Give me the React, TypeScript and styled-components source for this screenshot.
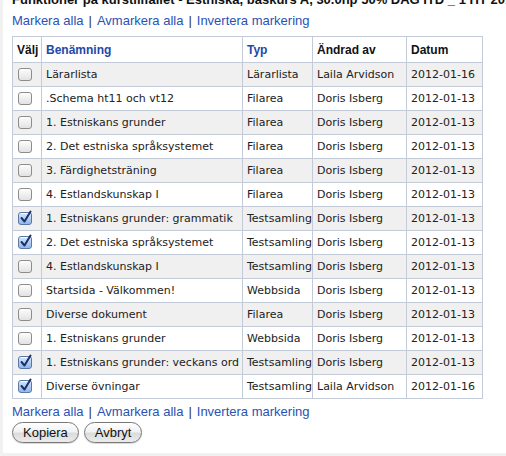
import * as React from "react";
import styled, { createGlobalStyle } from "styled-components";

const GlobalStyle = createGlobalStyle`
  html, body {
    margin: 0;
    padding: 0;
    background: #f1f1f1;
    overflow: hidden;
  }
  body {
    font-family: "Liberation Sans", Arial, sans-serif;
  }
`;

const rows = [
  { name: "Lärarlista", type: "Lärarlista", by: "Laila Arvidson", date: "2012-01-16", checked: false },
  { name: ".Schema ht11 och vt12", type: "Filarea", by: "Doris Isberg", date: "2012-01-13", checked: false },
  { name: "1. Estniskans grunder", type: "Filarea", by: "Doris Isberg", date: "2012-01-13", checked: false },
  { name: "2. Det estniska språksystemet", type: "Filarea", by: "Doris Isberg", date: "2012-01-13", checked: false },
  { name: "3. Färdighetsträning", type: "Filarea", by: "Doris Isberg", date: "2012-01-13", checked: false },
  { name: "4. Estlandskunskap I", type: "Filarea", by: "Doris Isberg", date: "2012-01-13", checked: false },
  { name: "1. Estniskans grunder: grammatik", type: "Testsamling", by: "Doris Isberg", date: "2012-01-13", checked: true },
  { name: "2. Det estniska språksystemet", type: "Testsamling", by: "Doris Isberg", date: "2012-01-13", checked: true },
  { name: "4. Estlandskunskap I", type: "Testsamling", by: "Doris Isberg", date: "2012-01-13", checked: false },
  { name: "Startsida - Välkommen!", type: "Webbsida", by: "Doris Isberg", date: "2012-01-13", checked: false },
  { name: "Diverse dokument", type: "Filarea", by: "Doris Isberg", date: "2012-01-13", checked: false },
  { name: "1. Estniskans grunder", type: "Webbsida", by: "Doris Isberg", date: "2012-01-13", checked: false },
  { name: "1. Estniskans grunder: veckans ord", type: "Testsamling", by: "Doris Isberg", date: "2012-01-13", checked: true },
  { name: "Diverse övningar", type: "Testsamling", by: "Laila Arvidson", date: "2012-01-16", checked: true },
];

const Page = styled.div`
  margin-left: 3px;
  height: 453px;
  background: #fff;
  overflow: hidden;
  padding: 0 9px;
`;

const Title = styled.h1`
  margin: -8px 0 0 0;
  font-size: 13px;
  line-height: 16px;
  font-weight: bold;
  color: #111;
  white-space: nowrap;
`;

const LinkBar = styled.div<{ $top: number }>`
  margin-top: ${(p) => p.$top}px;
  font-size: 13px;
  line-height: 16px;
  color: #555;
  white-space: nowrap;
`;

const Link = styled.a`
  color: #2a52b4;
  text-decoration: none;
  cursor: pointer;
`;

const Sep = styled.span`
  margin: 0 5px;
  color: #333;
`;

const Table = styled.table`
  margin-top: 7px;
  border-collapse: collapse;
  table-layout: fixed;
  width: 470px;
  font-family: "DejaVu Sans", Verdana, sans-serif;
  font-size: 11px;
  color: #222;
`;

const Th = styled.th<{ $link?: boolean }>`
  height: 25px;
  padding: 0 2px 0 4px;
  border: 1px solid #c3cbd8;
  background: #fff;
  text-align: left;
  font-family: "Liberation Sans", Arial, sans-serif;
  font-size: 12px;
  font-weight: bold;
  color: ${(p) => (p.$link ? "#2348a6" : "#111")};
  white-space: nowrap;
`;

const Tr = styled.tr<{ $odd: boolean }>`
  background: ${(p) => (p.$odd ? "#f0f0f0" : "#fff")};
`;

const Td = styled.td`
  height: 23px;
  padding: 0 1px 0 4px;
  border: 1px solid #c3cbd8;
  white-space: nowrap;
  overflow: hidden;
  text-overflow: clip;
`;

const Box = styled.span<{ $checked: boolean }>`
  display: inline-block;
  vertical-align: middle;
  position: relative;
  width: 12px;
  height: 11px;
  margin-left: 1px;
  border: 1px solid ${(p) => (p.$checked ? "#5a78a6" : "#8c8c8c")};
  border-radius: 3px;
  background: ${(p) =>
    p.$checked
      ? "linear-gradient(#d4e6fb, #8fb8ea)"
      : "linear-gradient(#fdfdfd, #e2e2e2)"};
  box-shadow: inset 0 1px 0 rgba(255, 255, 255, 0.8);
  svg {
    position: absolute;
    left: 1px;
    top: -3px;
  }
`;

const Buttons = styled.div`
  display: flex;
  gap: 5px;
  margin-top: 2px;
`;

const Button = styled.button`
  height: 21px;
  padding: 0 10px;
  border: 1px solid #777;
  border-radius: 11px;
  background: linear-gradient(#ffffff 0%, #f2f2f2 45%, #dcdcdc 55%, #ececec 100%);
  font-family: "Liberation Sans", Arial, sans-serif;
  font-size: 13px;
  color: #111;
  box-shadow: 0 1px 1px rgba(0, 0, 0, 0.15);
`;

const Check = ({ checked }: { checked: boolean }) => (
  <Box $checked={checked}>
    {checked && (
      <svg width="12" height="14" viewBox="0 0 12 14">
        <path d="M1.5 8 L4.5 11.5 L10.5 1.5" fill="none" stroke="#1d2f66" strokeWidth="2" strokeLinecap="round" strokeLinejoin="round" />
      </svg>
    )}
  </Box>
);

const Links = ({ top }: { top: number }) => (
  <LinkBar $top={top}>
    <Link>Markera alla</Link>
    <Sep>|</Sep>
    <Link>Avmarkera alla</Link>
    <Sep>|</Sep>
    <Link>Invertera markering</Link>
  </LinkBar>
);

const App = () => {
  return (
    <Page>
      <GlobalStyle />
      <Title>Funktioner på kurstillfället - Estniska, baskurs A, 30.0hp 50% DAG ITD _ 1 HT 2011</Title>
      <Links top={5} />
      <Table>
        <colgroup>
          <col style={{ width: 29 }} />
          <col style={{ width: 201 }} />
          <col style={{ width: 70 }} />
          <col style={{ width: 94 }} />
          <col style={{ width: 76 }} />
        </colgroup>
        <thead>
          <tr>
            <Th>Välj</Th>
            <Th $link>Benämning</Th>
            <Th $link>Typ</Th>
            <Th>Ändrad av</Th>
            <Th>Datum</Th>
          </tr>
        </thead>
        <tbody>
          {rows.map((r, i) => (
            <Tr key={i} $odd={i % 2 === 0}>
              <Td>
                <Check checked={r.checked} />
              </Td>
              <Td>{r.name}</Td>
              <Td>{r.type}</Td>
              <Td>{r.by}</Td>
              <Td>{r.date}</Td>
            </Tr>
          ))}
        </tbody>
      </Table>
      <Links top={5} />
      <Buttons>
        <Button>Kopiera</Button>
        <Button>Avbryt</Button>
      </Buttons>
    </Page>
  );
};

export default App;
